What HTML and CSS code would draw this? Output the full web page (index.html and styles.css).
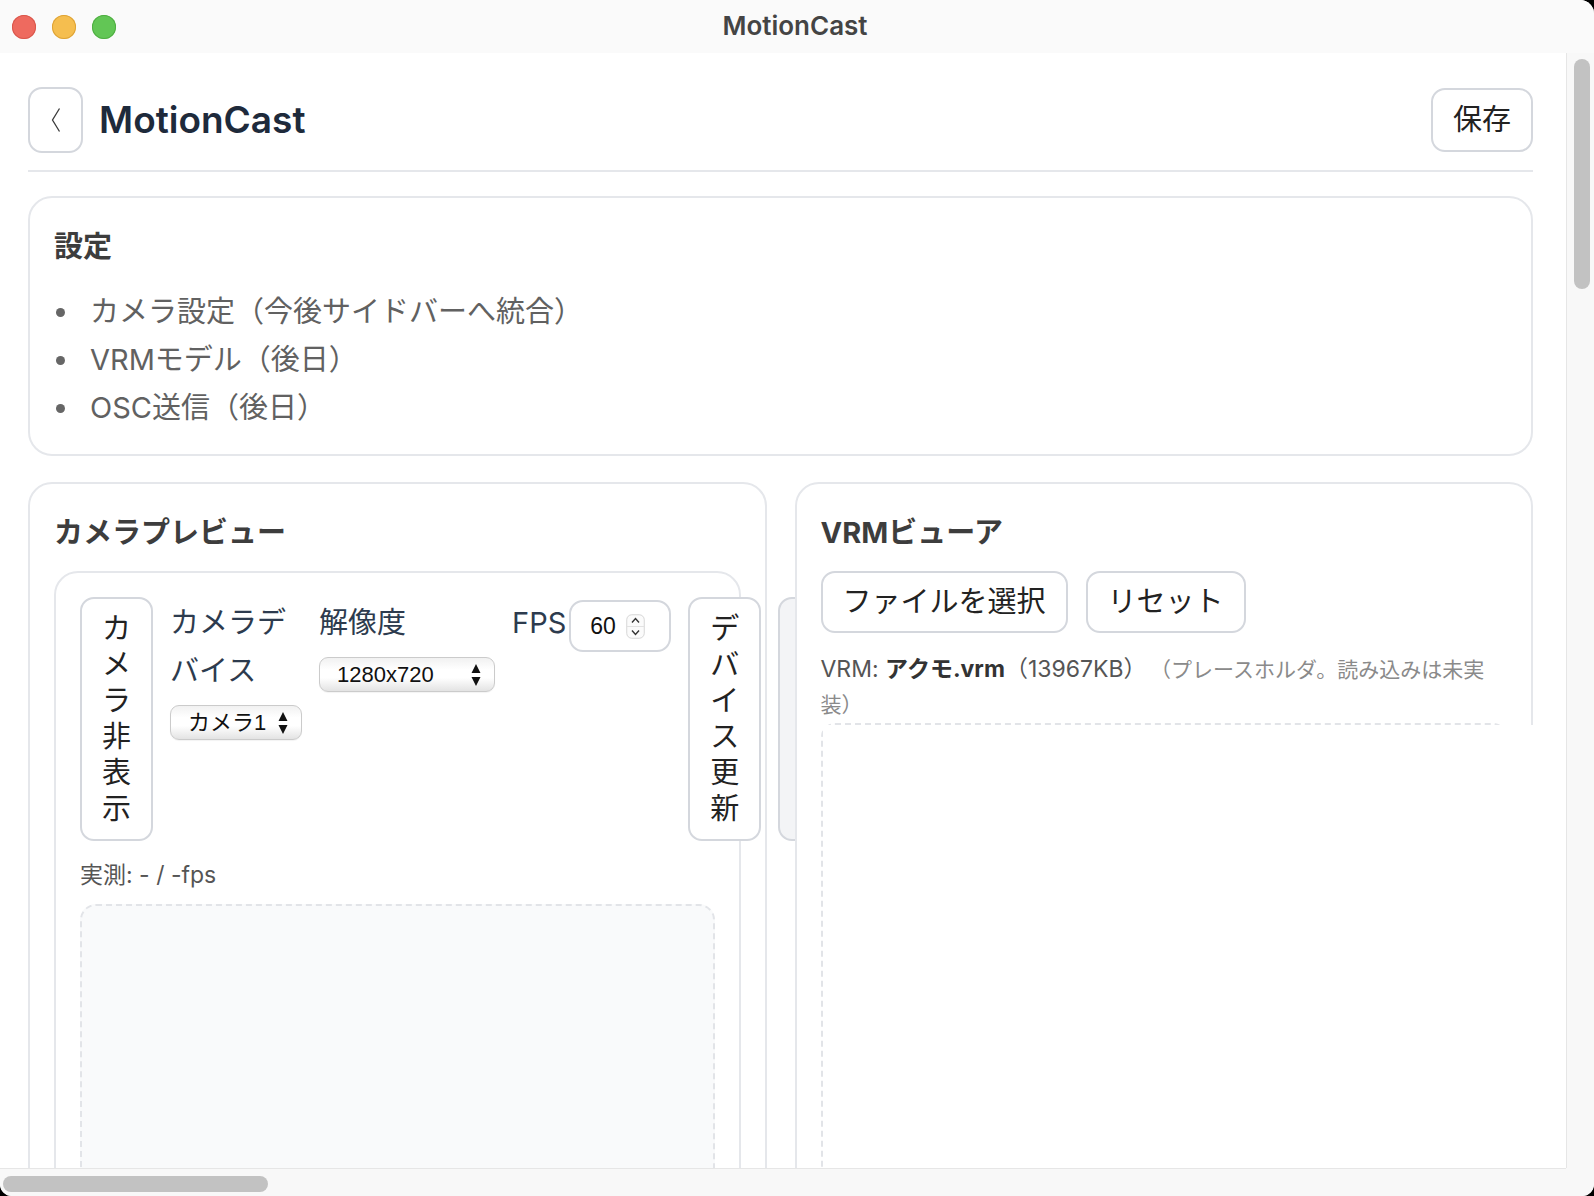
FILE: index.html
```html
<!DOCTYPE html>
<html lang="ja">
<head>
<meta charset="utf-8">
<title>MotionCast</title>
<link rel="stylesheet" href="styles.css">
</head>
<body>
<div class="window">
  <div class="titlebar">
    <div class="lights">
      <span class="light red"></span><span class="light yellow"></span><span class="light green"></span>
    </div>
    <div class="wtitle">MotionCast</div>
    <div></div>
  </div>
  <div class="viewport">
    <div class="scroll">
      <main class="app">
        <header class="app-header">
          <button class="back" aria-label="戻る"><svg width="12" height="26" viewBox="0 0 12 26"><polyline points="9.5,1.5 2.5,13 9.5,24.5" fill="none" stroke="#3a3a3a" stroke-width="1.3"/></svg></button>
          <h1>MotionCast</h1>
          <button class="btn save">保存</button>
        </header>
        <section class="card settings">
          <h2>設定</h2>
          <ul class="todo">
            <li>カメラ設定（今後サイドバーへ統合）</li>
            <li>VRMモデル（後日）</li>
            <li>OSC送信（後日）</li>
          </ul>
        </section>
        <div class="panels">
          <section class="card">
            <h2>カメラプレビュー</h2>
            <div class="inner">
              <div class="controls">
                <button class="btn vbtn">カメラ非表示</button>
                <label class="field"><span>カメラデバイス</span><span class="select w-cam"><span>カメラ1</span><svg width="10" height="24" viewBox="0 0 10 24"><path d="M5 1 L9.5 10 L0.5 10 Z M5 23 L9.5 14 L0.5 14 Z" fill="#111"/></svg></span></label>
                <label class="field"><span>解像度</span><span class="select w-res"><span>1280x720</span><svg width="10" height="24" viewBox="0 0 10 24"><path d="M5 1 L9.5 10 L0.5 10 Z M5 23 L9.5 14 L0.5 14 Z" fill="#111"/></svg></span></label>
                <label class="fps"><span>FPS</span><span class="num"><span>60</span><svg width="19" height="25" viewBox="0 0 19 25"><rect x="0.75" y="0.75" width="17.5" height="23.5" rx="5" fill="#fbfbfb" stroke="#d6d6d6" stroke-width="1"/><line x1="1" y1="12.5" x2="18" y2="12.5" stroke="#e2e2e2" stroke-width="1"/><polyline points="6,8.5 9.5,4.5 13,8.5" fill="none" stroke="#333" stroke-width="1.4"/><polyline points="6,16.5 9.5,20.5 13,16.5" fill="none" stroke="#333" stroke-width="1.4"/></svg></span></label>
                <button class="btn vbtn">デバイス更新</button>
                <button class="btn vbtn off">録画を開始</button>
              </div>
              <div class="stat">実測: - / -fps</div>
              <div class="video"></div>
            </div>
          </section>
          <section class="card">
            <h2>VRMビューア</h2>
            <div class="vrm-actions"><button class="btn">ファイルを選択</button><button class="btn">リセット</button></div>
            <p class="vrm-info">VRM: <b>アクモ.vrm</b>（13967KB）<span class="ph">（プレースホルダ。読み込みは未実装）</span></p>
            <div class="viewer"><div class="canvas"></div></div>
          </section>
        </div>
      </main>
    </div>
    <div class="vscroll"><div class="vthumb"></div></div>
  </div>
  <div class="hbar"><div class="hscroll"><div class="hthumb"></div></div><div class="corner"></div></div>
</div>
</body>
</html>
```

FILE: styles.css
```css
* { box-sizing: border-box; }
html, body { margin: 0; height: 100%; background: #000; }
body { font-family: Inter, "Noto Sans CJK JP", sans-serif; font-feature-settings: "calt" 0; }

.window {
  width: 1594px; height: 1196px;
  display: flex; flex-direction: column;
  background: #fff;
  border-radius: 0 14px 12px 12px;
  overflow: hidden;
}

/* title bar */
.titlebar {
  height: 53px; flex: none;
  background: #fafafa;
  display: grid; grid-template-columns: 1fr auto 1fr; align-items: center;
}
.lights { display: flex; gap: 16px; padding-left: 12px; }
.light { width: 24px; height: 24px; border-radius: 50%; }
.red { background: #ee6a5f; box-shadow: inset 0 0 0 1px #d9574c; }
.yellow { background: #f5be4f; box-shadow: inset 0 0 0 1px #dea336; }
.green { background: #62c655; box-shadow: inset 0 0 0 1px #4fae42; }
.wtitle { font-family: Inter, sans-serif; font-weight: 600; font-size: 26px; color: #444; margin: -2px 4px 0 0; }

/* scroll frame */
.viewport { flex: 1; min-height: 0; display: flex; }
.scroll { flex: 1; min-width: 0; overflow: hidden; }
.vscroll { width: 28px; flex: none; background: #f8f8f8; border-left: 1px solid #e6e6e6; padding: 6px 0 0 7px; }
.vthumb { width: 16px; height: 230px; border-radius: 8px; background: #c2c2c2; }
.hbar { height: 28px; flex: none; display: flex; background: #f8f8f8; }
.hscroll { flex: 1; border-top: 1px solid #e6e6e6; padding: 7px 0 0 3px; }
.hthumb { width: 265px; height: 16px; border-radius: 8px; background: #c2c2c2; }
.corner { width: 28px; flex: none; }

/* app */
.app { padding: 34px 33px 0 28px; }
.app-header {
  display: flex; align-items: center; gap: 14px;
  padding-bottom: 17px; border-bottom: 2px solid #e5e7eb;
}
.back {
  width: 55px; height: 66px; padding: 0;
  border: 2px solid #d4d7dd; border-radius: 14px; background: #fff;
  display: flex; align-items: center; justify-content: center;
}
h1 { margin: 0 0 0 2px; font-family: Inter, sans-serif; font-weight: 600; font-size: 37px; line-height: 1.2; color: #1e2a3b; }

.btn {
  font-family: inherit; font-size: 29px; line-height: 36px; color: #222;
  background: #fff; border: 2px solid #d4d7dd; border-radius: 14px;
  padding: 12px 20px; margin: 0;
}
.save { margin-left: auto; }

.card { border: 2px solid #e5e7eb; border-radius: 24px; padding: 24px; background: #fff; min-width: 0; }
.settings { margin-top: 24px; padding-bottom: 22px; }
h2 { margin: 0; font-size: 29px; line-height: 49px; font-weight: 700; color: #3d3d3d; }

.todo { list-style: none; margin: 17px 0 0; padding: 0; }
.todo li { display: flex; align-items: center; font-size: 29px; line-height: 48px; color: #616161; }
.todo li::before {
  content: ""; flex: none; width: 9px; height: 9px; border-radius: 50%;
  background: #666; margin: 0 25px 0 2px;
}

.panels { display: grid; grid-template-columns: minmax(0, 1fr) minmax(0, 1fr); gap: 28px; margin-top: 26px; align-items: start; }

.inner { margin-top: 14px; border: 2px solid #e5e7eb; border-radius: 24px; padding: 24px; }
.controls { display: flex; gap: 17px; }
.controls > * { flex: none; }
.vbtn { width: min-content; }
.off { background: #f3f4f6; }

.field {
  width: min-content; display: flex; flex-direction: column; gap: 10px;
  margin-top: 2px;
  font-size: 29px; line-height: 48px; color: #2d3b4e;
}
.select {
  display: flex; align-items: center; justify-content: space-between;
  height: 35px; padding: 0 13px 0 17px;
  border: 1px solid #cbcbcb; border-radius: 9px;
  background: linear-gradient(#f1f1f1, #ffffff 35%, #ffffff 60%, #e3e3e3);
  box-shadow: 0 1px 1px rgba(0,0,0,.05);
  font-family: "Liberation Sans", "Noto Sans CJK JP", sans-serif;
  font-size: 22px; line-height: 1; color: #111;
}
.w-cam { width: 132px; }
.w-res { width: 176px; }

.fps {
  display: flex; align-items: flex-start; gap: 3px; white-space: nowrap;
  margin-top: 2px;
  font-size: 29px; line-height: 48px; color: #2d3b4e;
}
.num {
  margin-top: 1px; width: 102px; height: 52px;
  border: 2px solid #d4d7dd; border-radius: 14px; background: #fff;
  display: flex; align-items: center; gap: 10px; padding-left: 19px;
  font-family: "Liberation Sans", sans-serif;
  font-size: 23px; line-height: 1; color: #111;
}

.stat { margin-top: 18px; font-size: 23px; line-height: 33px; color: #555; }
.video {
  margin-top: 12px; height: 357px;
  border: 2px dashed #e2e4e8; border-radius: 16px; background: #f9fafb;
}

.vrm-actions { margin-top: 14px; display: flex; gap: 18px; }
.vrm-actions .btn { padding: 11px 20px; }
.vrm-info { margin: 19px 0 0; font-size: 23px; line-height: 35px; color: #555; }
.vrm-info b { color: #333; font-weight: 700; }
.ph { font-size: 21px; color: #8a8a8a; margin-left: 14px; }
.viewer { margin-top: 1px; border: 2px dashed #e2e4e8; border-radius: 14px; }
.canvas { width: 2400px; height: 600px; background: #fff; }
```
